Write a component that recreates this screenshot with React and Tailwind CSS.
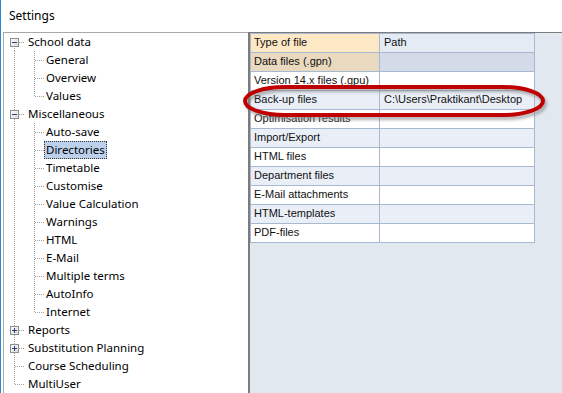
import React from "react";

const tree = [
  { label: "School data", level: 0, box: "minus", first: true },
  { label: "General", level: 1 },
  { label: "Overview", level: 1 },
  { label: "Values", level: 1, lastChild: true },
  { label: "Miscellaneous", level: 0, box: "minus" },
  { label: "Auto-save", level: 1 },
  { label: "Directories", level: 1, selected: true },
  { label: "Timetable", level: 1 },
  { label: "Customise", level: 1 },
  { label: "Value Calculation", level: 1 },
  { label: "Warnings", level: 1 },
  { label: "HTML", level: 1 },
  { label: "E-Mail", level: 1 },
  { label: "Multiple terms", level: 1 },
  { label: "AutoInfo", level: 1 },
  { label: "Internet", level: 1, lastChild: true },
  { label: "Reports", level: 0, box: "plus" },
  { label: "Substitution Planning", level: 0, box: "plus" },
  { label: "Course Scheduling", level: 0 },
  { label: "MultiUser", level: 0, last: true },
];

const rows = [
  { name: "Data files (.gpn)", path: "", tone: "data" },
  { name: "Version 14.x files (.gpu)", path: "", tone: "white" },
  { name: "Back-up files", path: "C:\\Users\\Praktikant\\Desktop", tone: "light" },
  { name: "Optimisation results", path: "", tone: "white" },
  { name: "Import/Export", path: "", tone: "light" },
  { name: "HTML files", path: "", tone: "white" },
  { name: "Department files", path: "", tone: "light" },
  { name: "E-Mail attachments", path: "", tone: "white" },
  { name: "HTML-templates", path: "", tone: "light" },
  { name: "PDF-files", path: "", tone: "white" },
];

const dot = { stroke: "#a0a0a0", strokeDasharray: "1 1", shapeRendering: "crispEdges" };

const Connector = ({ item }) => {
  const w = item.level === 0 ? 22 : 40;
  return (
    <svg width={w} height="18" className="shrink-0">
      {/* level 0 trunk */}
      <line x1="10.5" x2="10.5" y1={item.first ? 9 : 0} y2={item.last ? 9 : 18} style={dot} />
      {item.level === 0 ? (
        <line x1="11" x2="21" y1="9.5" y2="9.5" style={dot} />
      ) : (
        <>
          <line x1="30.5" x2="30.5" y1="0" y2={item.lastChild ? 9 : 18} style={dot} />
          <line x1="31" x2="40" y1="9.5" y2="9.5" style={dot} />
        </>
      )}
      {item.box && (
        <g>
          <defs>
            <linearGradient id="bx" x1="0" x2="1" y1="0" y2="1">
              <stop offset="0" stopColor="#ffffff" />
              <stop offset="1" stopColor="#d8d8d8" />
            </linearGradient>
          </defs>
          <rect x="6.5" y="5.5" width="8" height="8" fill="url(#bx)" stroke="#8f8f8f" shapeRendering="crispEdges" />
          <line x1="8" x2="13" y1="9.5" y2="9.5" stroke="#2c3e78" shapeRendering="crispEdges" />
          {item.box === "plus" && (
            <line x1="10.5" x2="10.5" y1="7" y2="12" stroke="#2c3e78" shapeRendering="crispEdges" />
          )}
        </g>
      )}
    </svg>
  );
};

const toneClass = {
  data: ["bg-[#e9d9be]", "bg-[#d3dbe9]"],
  white: ["bg-white", "bg-white"],
  light: ["bg-[#eaeff7]", "bg-[#eaeff7]"],
};

const App = () => {
  return (
    <div className="relative w-[562px] h-[393px] overflow-hidden bg-white border-l border-[#2b88d8] flex flex-col">
      <div className="h-[32px] flex items-center pl-[8px] text-[12px] text-black font-['Noto_Sans',sans-serif]">
        Settings
      </div>

      <div className="flex flex-1 min-h-0 pl-[2px]">
        <div className="w-[245px] border-l border-t border-[#a9a9a9] bg-white font-['Noto_Sans',sans-serif] text-[11.5px] text-black">
          {tree.map((item) => (
            <div key={item.label} className="flex items-center h-[18px]">
              <Connector item={item} />
              <span
                className={`px-[2px] h-[18px] leading-[17px] whitespace-nowrap ${
                  item.selected ? "bg-[#bcd0ec] outline outline-1 outline-dotted outline-[#333] -outline-offset-1" : ""
                }`}
              >
                {item.label}
              </span>
            </div>
          ))}
        </div>

        <div className="flex-1 border-l-2 border-t border-[#7c7c7c] bg-[#e1e8f0] font-['Liberation_Sans',Arial,sans-serif] text-[11px] text-[#111]">
          <table className="border-collapse">
            <tbody>
              <tr className="h-[19px]">
                <td className="w-[129px] border border-[#a9b8d1] bg-[#fde8c6] pl-[3px] pb-[2px] leading-none">Type of file</td>
                <td className="w-[155px] border border-[#a9b8d1] bg-[#e4ebf5] pl-[4px] pb-[2px] leading-none">Path</td>
              </tr>
              {rows.map((r) => (
                <tr key={r.name} className="h-[19px]">
                  <td className={`border border-[#a9b8d1] pl-[3px] pb-[2px] leading-none whitespace-nowrap overflow-hidden ${toneClass[r.tone][0]}`}>
                    {r.name}
                  </td>
                  <td className={`border border-[#a9b8d1] pl-[4px] pb-[2px] leading-none whitespace-nowrap ${toneClass[r.tone][1]}`}>
                    {r.path}
                  </td>
                </tr>
              ))}
            </tbody>
          </table>
        </div>
      </div>

      {/* red annotation around the back-up row */}
      <svg className="absolute left-[236px] top-[78px] pointer-events-none" width="320" height="48">
        <defs>
          <filter id="sh" x="-10%" y="-50%" width="120%" height="200%">
            <feGaussianBlur stdDeviation="1.5" />
          </filter>
        </defs>
        <rect x="10" y="12" width="298" height="28" rx="40" ry="14" fill="none" stroke="#808080" strokeOpacity="0.6" strokeWidth="4" filter="url(#sh)" />
        <rect x="8" y="9" width="298" height="28" rx="40" ry="14" fill="none" stroke="#c00000" strokeWidth="4" />
      </svg>
    </div>
  );
};

export default App;
